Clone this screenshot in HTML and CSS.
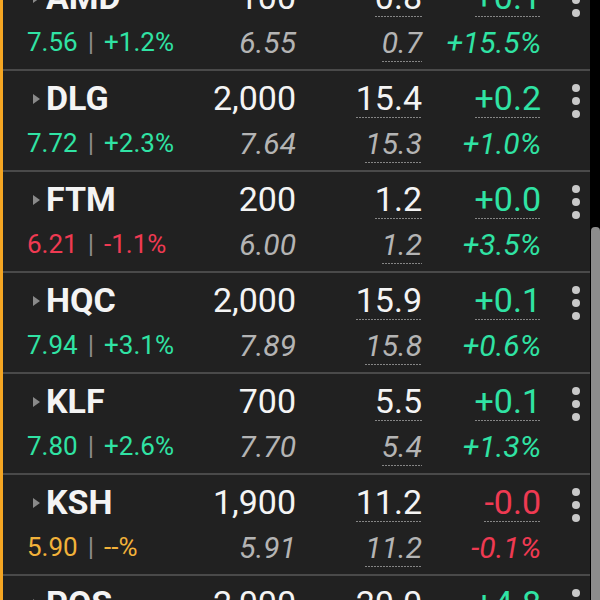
FILE: index.html
```html
<!DOCTYPE html>
<html lang="en">
<head>
    <meta charset="UTF-8">
    <meta name="viewport" content="width=device-width, initial-scale=1.0">
    <title>Watchlist</title>
    <link rel="stylesheet" href="styles.css">
</head>
<body>
    <div class="screen">
        <div class="list">
            <div class="row">
                <div class="name">
                    <div class="ticker"><span class="caret"></span>AMD</div>
                    <div class="last up">7.56<span class="bar">|</span>+1.2%</div>
                </div>
                <div class="cell">
                    <span class="top">100</span>
                    <span class="sub">6.55</span>
                </div>
                <div class="cell">
                    <span class="top dash">0.8</span>
                    <span class="sub dash">0.7</span>
                </div>
                <div class="cell up">
                    <span class="top dash">+0.1</span>
                    <span class="sub">+15.5%</span>
                </div>
                <div class="more"><i></i><i></i><i></i></div>
            </div>

            <div class="row">
                <div class="name">
                    <div class="ticker"><span class="caret"></span>DLG</div>
                    <div class="last up">7.72<span class="bar">|</span>+2.3%</div>
                </div>
                <div class="cell">
                    <span class="top">2,000</span>
                    <span class="sub">7.64</span>
                </div>
                <div class="cell">
                    <span class="top dash">15.4</span>
                    <span class="sub dash">15.3</span>
                </div>
                <div class="cell up">
                    <span class="top dash">+0.2</span>
                    <span class="sub">+1.0%</span>
                </div>
                <div class="more"><i></i><i></i><i></i></div>
            </div>

            <div class="row">
                <div class="name">
                    <div class="ticker"><span class="caret"></span>FTM</div>
                    <div class="last down">6.21<span class="bar">|</span>-1.1%</div>
                </div>
                <div class="cell">
                    <span class="top">200</span>
                    <span class="sub">6.00</span>
                </div>
                <div class="cell">
                    <span class="top dash">1.2</span>
                    <span class="sub dash">1.2</span>
                </div>
                <div class="cell up">
                    <span class="top dash">+0.0</span>
                    <span class="sub">+3.5%</span>
                </div>
                <div class="more"><i></i><i></i><i></i></div>
            </div>

            <div class="row">
                <div class="name">
                    <div class="ticker"><span class="caret"></span>HQC</div>
                    <div class="last up">7.94<span class="bar">|</span>+3.1%</div>
                </div>
                <div class="cell">
                    <span class="top">2,000</span>
                    <span class="sub">7.89</span>
                </div>
                <div class="cell">
                    <span class="top dash">15.9</span>
                    <span class="sub dash">15.8</span>
                </div>
                <div class="cell up">
                    <span class="top dash">+0.1</span>
                    <span class="sub">+0.6%</span>
                </div>
                <div class="more"><i></i><i></i><i></i></div>
            </div>

            <div class="row">
                <div class="name">
                    <div class="ticker"><span class="caret"></span>KLF</div>
                    <div class="last up">7.80<span class="bar">|</span>+2.6%</div>
                </div>
                <div class="cell">
                    <span class="top">700</span>
                    <span class="sub">7.70</span>
                </div>
                <div class="cell">
                    <span class="top dash">5.5</span>
                    <span class="sub dash">5.4</span>
                </div>
                <div class="cell up">
                    <span class="top dash">+0.1</span>
                    <span class="sub">+1.3%</span>
                </div>
                <div class="more"><i></i><i></i><i></i></div>
            </div>

            <div class="row">
                <div class="name">
                    <div class="ticker"><span class="caret"></span>KSH</div>
                    <div class="last flat">5.90<span class="bar">|</span>--%</div>
                </div>
                <div class="cell">
                    <span class="top">1,900</span>
                    <span class="sub">5.91</span>
                </div>
                <div class="cell">
                    <span class="top dash">11.2</span>
                    <span class="sub dash">11.2</span>
                </div>
                <div class="cell down">
                    <span class="top dash">-0.0</span>
                    <span class="sub">-0.1%</span>
                </div>
                <div class="more"><i></i><i></i><i></i></div>
            </div>

            <div class="row">
                <div class="name">
                    <div class="ticker"><span class="caret"></span>POS</div>
                    <div class="last up">21.0<span class="bar">|</span>+5.0%</div>
                </div>
                <div class="cell">
                    <span class="top">2,000</span>
                    <span class="sub">20.0</span>
                </div>
                <div class="cell">
                    <span class="top dash">20.0</span>
                    <span class="sub dash">20.0</span>
                </div>
                <div class="cell up">
                    <span class="top dash">+4.8</span>
                    <span class="sub">+31.6%</span>
                </div>
                <div class="more"><i></i><i></i><i></i></div>
            </div>
        </div>
        <div class="scrollbar"><div class="thumb"></div></div>
    </div>
</body>
</html>
```

FILE: styles.css
```css
* {
    margin: 0;
    padding: 0;
    box-sizing: border-box;
}
body {
    background-color: #000;
    font-family: Roboto, "Liberation Sans", sans-serif;
    color: #f4f4f4;
}
.screen {
    display: flex;
    width: 600px;
    height: 600px;
    overflow: hidden;
}
.list {
    flex: 1;
    margin-top: -30px;
    border-left: 3px solid #f5a623;
    background-color: #212121;
}
.row {
    display: grid;
    grid-template-columns: 1fr 100px 126px 119px 49px;
    padding: 8px 0 7px 24px;
    border-bottom: 2px solid #4a4a4a;
}
.name {
    display: flex;
    flex-direction: column;
    gap: 6px;
}
.ticker {
    display: flex;
    align-items: center;
    font-size: 34px;
    font-weight: bold;
    line-height: 39px;
}
.caret {
    width: 0;
    height: 0;
    margin: 0 6px 0 6px;
    border-left: 7px solid #8a8a8a;
    border-top: 5px solid transparent;
    border-bottom: 5px solid transparent;
}
.last {
    font-size: 26px;
    line-height: 39px;
}
.bar {
    margin: 0 10px;
    color: #8c8c8c;
}
.cell {
    display: flex;
    flex-direction: column;
    align-items: flex-end;
    gap: 6px;
}
.top {
    font-size: 34px;
    line-height: 39px;
}
.sub {
    font-size: 30px;
    font-style: italic;
    line-height: 39px;
    color: #b4b4b4;
}
.dash {
    background: repeating-linear-gradient(90deg, #858585 0 2px, transparent 2px 3px) bottom / 100% 1px no-repeat;
}
.up,
.up .top,
.up .sub {
    color: #30e3a4;
}
.down,
.down .top,
.down .sub {
    color: #ef3a52;
}
.flat {
    color: #f2b23a;
}
.more {
    justify-self: end;
    display: flex;
    flex-direction: column;
    gap: 5px;
    margin: 5px 10px 0 0;
}
.more i {
    width: 8px;
    height: 8px;
    border-radius: 50%;
    background-color: #c8c8c8;
}
.scrollbar {
    display: flex;
    flex-direction: column;
    width: 10px;
    padding-left: 1px;
}
.thumb {
    flex: 1;
    margin-top: 227px;
    background-color: #8c8c8c;
    border-radius: 4px 4px 0 0;
}
```
